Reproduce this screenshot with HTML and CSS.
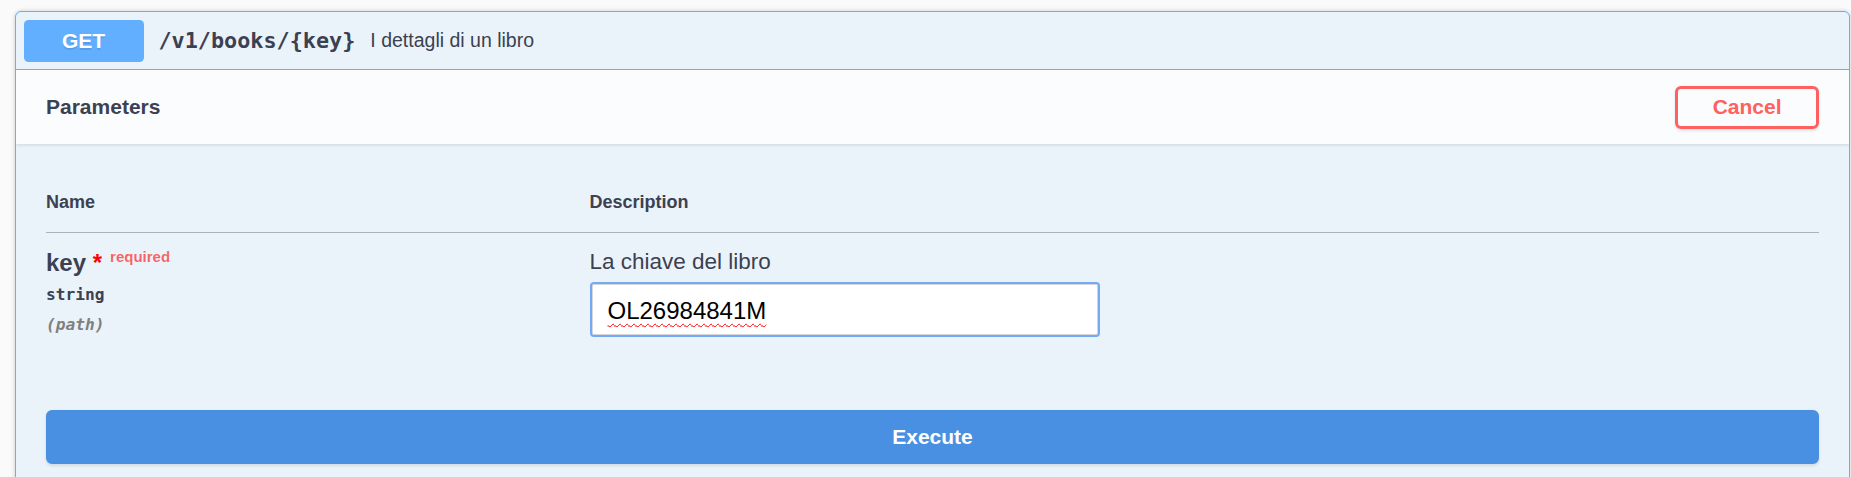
FILE: index.html
```html
<!DOCTYPE html>
<html lang="it">
<head>
<meta charset="utf-8">
<title>GET /v1/books/{key}</title>
<link rel="stylesheet" href="styles.css">
</head>
<body>
<div class="page">
  <div class="opblock">
    <div class="summary">
      <span class="method">GET</span>
      <span class="path">/v1/books/{key}</span>
      <span class="summary-desc">I dettagli di un libro</span>
    </div>
    <div class="section-header">
      <h4 class="title">Parameters</h4>
      <button class="btn-cancel">Cancel</button>
    </div>
    <div class="table-container">
      <table class="params">
        <thead>
          <tr>
            <th class="col-name">Name</th>
            <th class="col-desc">Description</th>
          </tr>
        </thead>
        <tbody>
          <tr>
            <td class="cell-name">
              <div class="param-name">key<span class="star">&nbsp;*</span><span class="req">required</span></div>
              <div class="param-type">string</div>
              <div class="param-in">(path)</div>
            </td>
            <td class="cell-desc">
              <p class="desc-text">La chiave del libro</p>
              <div class="text-input"><span class="misspelled">OL26984841M</span></div>
            </td>
          </tr>
        </tbody>
      </table>
    </div>
    <div class="btn-group">
      <button class="btn-execute">Execute</button>
    </div>
  </div>
</div>
</body>
</html>
```

FILE: styles.css
```css
html, body {
  margin: 0;
  padding: 0;
  background: #fafafa;
  overflow: hidden;
  font-family: "Liberation Sans", Arial, sans-serif;
  color: #3b4151;
}

.page {
  padding: 11px 0 0 15px;
}

.opblock {
  width: 1835px;
  box-sizing: border-box;
  border: 1.5px solid #61affe;
  border-radius: 6px;
  background: #ebf3fa;
  box-shadow: 0 0 4.5px rgba(0, 0, 0, 0.19);
  overflow: hidden;
}

.summary {
  display: flex;
  align-items: center;
  padding: 7.5px 7.5px 7.5px;
  border-bottom: 1.5px solid #61affe;
}

.method {
  min-width: 120px;
  height: 42px;
  line-height: 42px;
  text-align: center;
  background: #61affe;
  color: #fff;
  border-radius: 4.5px;
  font-size: 21px;
  font-weight: 700;
  text-shadow: 0 1.5px 0 rgba(0, 0, 0, 0.1);
}

.path {
  padding: 0 15px;
  font-family: "DejaVu Sans Mono", "Liberation Mono", monospace;
  font-size: 21.8px;
  font-weight: 700;
  color: #3b4151;
}

.summary-desc {
  font-size: 19.5px;
  color: #3b4151;
}

.section-header {
  display: flex;
  align-items: center;
  box-sizing: border-box;
  min-height: 74px;
  padding: 12px 30px;
  background: #fbfcfe;
  box-shadow: 0 1.5px 3px rgba(0, 0, 0, 0.1);
}

.title {
  flex: 1;
  margin: 0;
  font-size: 21px;
  font-weight: 700;
  color: #3b4151;
}

.btn-cancel {
  height: 43px;
  padding: 0 34.5px;
  border: 3px solid #ff6060;
  border-radius: 6px;
  background: transparent;
  color: #ff6060;
  font-family: "Liberation Sans", Arial, sans-serif;
  font-size: 21px;
  font-weight: 700;
  box-shadow: 0 1.5px 3px rgba(0, 0, 0, 0.1);
}

.table-container {
  padding: 30px 30px 30px;
}

.params {
  width: 100%;
  border-collapse: collapse;
}

.params th {
  padding: 18px 0 19px;
  text-align: left;
  font-size: 18px;
  font-weight: 700;
  color: #3b4151;
  border-bottom: 1.5px solid rgba(59, 65, 81, 0.2);
}

.col-name {
  width: 543.5px;
}

.params td {
  padding: 15px 0 0;
  vertical-align: top;
}

.param-name {
  font-size: 24px;
  font-weight: 700;
  color: #3b4151;
}

.star {
  color: #ff0000;
}

.req {
  font-size: 15px;
  font-weight: 700;
  color: rgba(255, 0, 0, 0.6);
  padding: 0 7.5px 0 8px;
  vertical-align: 8.5px;
}

.param-type {
  padding: 8.5px 0 7.5px;
  font-family: "DejaVu Sans Mono", "Liberation Mono", monospace;
  font-size: 16.2px;
  font-weight: 700;
  color: #3b4151;
}

.param-in {
  padding-top: 3.5px;
  font-family: "DejaVu Sans Mono", "Liberation Mono", monospace;
  font-size: 16.2px;
  font-weight: 700;
  font-style: italic;
  color: #808080;
}

.desc-text {
  margin: 1px 0 0;
  font-size: 22.5px;
  color: #3b4151;
}

.text-input {
  width: 510px;
  height: 55px;
  box-sizing: border-box;
  margin: 7px 0 7.5px 0;
  padding: 0 16px;
  display: flex;
  align-items: center;
  background: #fff;
  border: 2px solid #74a9f4;
  border-radius: 4px;
  box-shadow: inset 0 0 0 1px #d6d6d6;
  font-size: 24px;
  color: #000;
}

.misspelled {
  padding-top: 2px;
  text-decoration: underline wavy #ff0000;
  text-decoration-thickness: 1px;
  text-underline-offset: 4px;
}

.btn-group {
  display: flex;
  padding: 35.5px 30px 30px;
}

.btn-execute {
  flex: 1;
  height: 53.5px;
  border: 3px solid #4990e2;
  border-radius: 6px;
  background: #4990e2;
  color: #fff;
  font-family: "Liberation Sans", Arial, sans-serif;
  font-size: 21px;
  font-weight: 700;
  box-shadow: 0 1.5px 3px rgba(0, 0, 0, 0.1);
}
```
